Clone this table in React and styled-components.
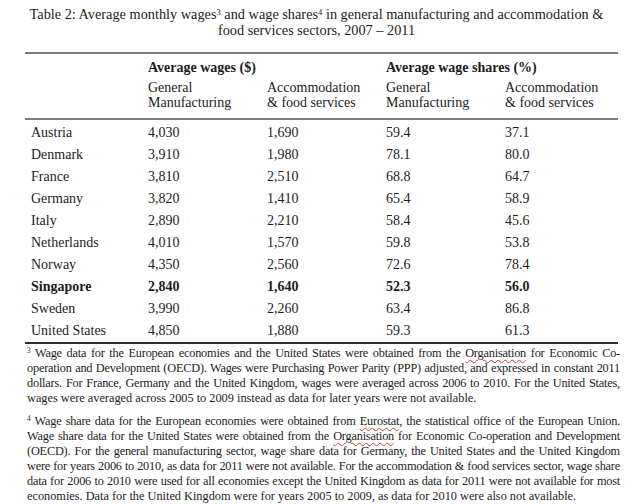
import styled, { createGlobalStyle } from 'styled-components';

const rows = [
    ['Austria', '4,030', '1,690', '59.4', '37.1'],
    ['Denmark', '3,910', '1,980', '78.1', '80.0'],
    ['France', '3,810', '2,510', '68.8', '64.7'],
    ['Germany', '3,820', '1,410', '65.4', '58.9'],
    ['Italy', '2,890', '2,210', '58.4', '45.6'],
    ['Netherlands', '4,010', '1,570', '59.8', '53.8'],
    ['Norway', '4,350', '2,560', '72.6', '78.4'],
    ['Singapore', '2,840', '1,640', '52.3', '56.0', true],
    ['Sweden', '3,990', '2,260', '63.4', '86.8'],
    ['United States', '4,850', '1,880', '59.3', '61.3'],
];

function App() {
    return (
        <>
            <GlobalStyle />
            <Page>
                <Title>
                    Table 2: Average monthly wages<Sup>3</Sup> and wage shares<Sup>4</Sup> in general
                    manufacturing and accommodation &amp;
                    <br />
                    food services sectors, 2007 – 2011
                </Title>
                <Table>
                    <Head>
                        <GroupRow>
                            <Cell />
                            <GroupLabel>Average wages ($)</GroupLabel>
                            <GroupLabel>Average wage shares (%)</GroupLabel>
                        </GroupRow>
                        <SubRow>
                            <Cell />
                            <SubLabel>General<br />Manufacturing</SubLabel>
                            <SubLabel>Accommodation<br />&amp; food services</SubLabel>
                            <SubLabel>General<br />Manufacturing</SubLabel>
                            <SubLabel>Accommodation<br />&amp; food services</SubLabel>
                        </SubRow>
                    </Head>
                    <Body>
                        {rows.map(([name, a, b, c, d, bold]) => (
                            <Row key={name} $bold={bold}>
                                <Country>{name}</Country>
                                <Cell>{a}</Cell>
                                <Cell>{b}</Cell>
                                <Cell>{c}</Cell>
                                <Cell>{d}</Cell>
                            </Row>
                        ))}
                    </Body>
                </Table>
                <Notes>
                    <Note>
                        <Line><Sup>3</Sup> Wage data for the European economies and the United States were obtained from the <Squiggle>Organisation</Squiggle> for Economic Co-</Line>
                        <Line>operation and Development (OECD). Wages were Purchasing Power Parity (PPP) adjusted, and expressed in constant 2011</Line>
                        <Line>dollars. For France, Germany and the United Kingdom, wages were averaged across 2006 to 2010. For the United States,</Line>
                        <Line $last>wages were averaged across 2005 to 2009 instead as data for later years were not available.</Line>
                    </Note>
                    <Note>
                        <Line><Sup>4</Sup> Wage share data for the European economies were obtained from <Squiggle>Eurostat</Squiggle>, the statistical office of the European Union.</Line>
                        <Line>Wage share data for the United States were obtained from the <Squiggle>Organisation</Squiggle> for Economic Co-operation and Development</Line>
                        <Line>(OECD). For the general manufacturing sector, wage share data for Germany, the United States and the United Kingdom</Line>
                        <Line>were for years 2006 to 2010, as data for 2011 were not available. For the accommodation &amp; food services sector, wage share</Line>
                        <Line>data for 2006 to 2010 were used for all economies except the United Kingdom as data for 2011 were not available for most</Line>
                        <Line $last>economies. Data for the United Kingdom were for years 2005 to 2009, as data for 2010 were also not available.</Line>
                    </Note>
                </Notes>
            </Page>
        </>
    );
}

const GlobalStyle = createGlobalStyle`
    body {
        margin: 0;
        background: #ffffff;
        color: #1c1c1c;
        font-family: "Liberation Serif", "Times New Roman", serif;
    }
`;

const Page = styled.div`
    width: 633px;
    height: 504px;
    padding-top: 6px;
    box-sizing: border-box;
    overflow: hidden;
`;

const Title = styled.div`
    font-size: 14.3px;
    line-height: 16px;
    text-align: center;
`;

const Sup = styled.sup`
    font-size: 0.6em;
    vertical-align: 0.5em;
    line-height: 0;
`;

const Table = styled.div`
    margin: 14px 15px 0 25px;
    font-size: 14px;
`;

const columns = '123px 119px 119px 119px 1fr';

const Head = styled.div`
    border-top: 2px solid #7c7c7c;
    border-bottom: 2px solid #7c7c7c;
    padding: 5px 0 8px;
`;

const GroupRow = styled.div`
    display: grid;
    grid-template-columns: 123px 238px 1fr;
    line-height: 18px;
`;

const GroupLabel = styled.div`
    font-weight: bold;
`;

const SubRow = styled.div`
    display: grid;
    grid-template-columns: ${columns};
    margin-top: 3px;
    line-height: 15px;
`;

const SubLabel = styled.div``;

const Body = styled.div`
    padding-top: 2px;
    border-bottom: 2px solid #2e2e2e;
`;

const Row = styled.div`
    display: grid;
    grid-template-columns: ${columns};
    height: 22px;
    line-height: 22px;
    font-weight: ${(p) => (p.$bold ? 'bold' : 'normal')};
`;

const Cell = styled.div``;

const Country = styled.div`
    padding-left: 6px;
`;

const Notes = styled.div`
    margin: 2px 13px 0 27px;
    font-size: 12.3px;
    line-height: 15px;
`;

const Note = styled.div`
    & + & {
        margin-top: 8px;
    }
`;

const Line = styled.div`
    text-align: justify;
    text-align-last: ${(p) => (p.$last ? 'left' : 'justify')};
    letter-spacing: ${(p) => (p.$last ? '0' : '-0.2px')};
    white-space: nowrap;
`;

const Squiggle = styled.span`
    text-decoration: underline wavy #d04040;
    text-decoration-thickness: 1px;
    text-underline-offset: 2px;
`;

export default App;
